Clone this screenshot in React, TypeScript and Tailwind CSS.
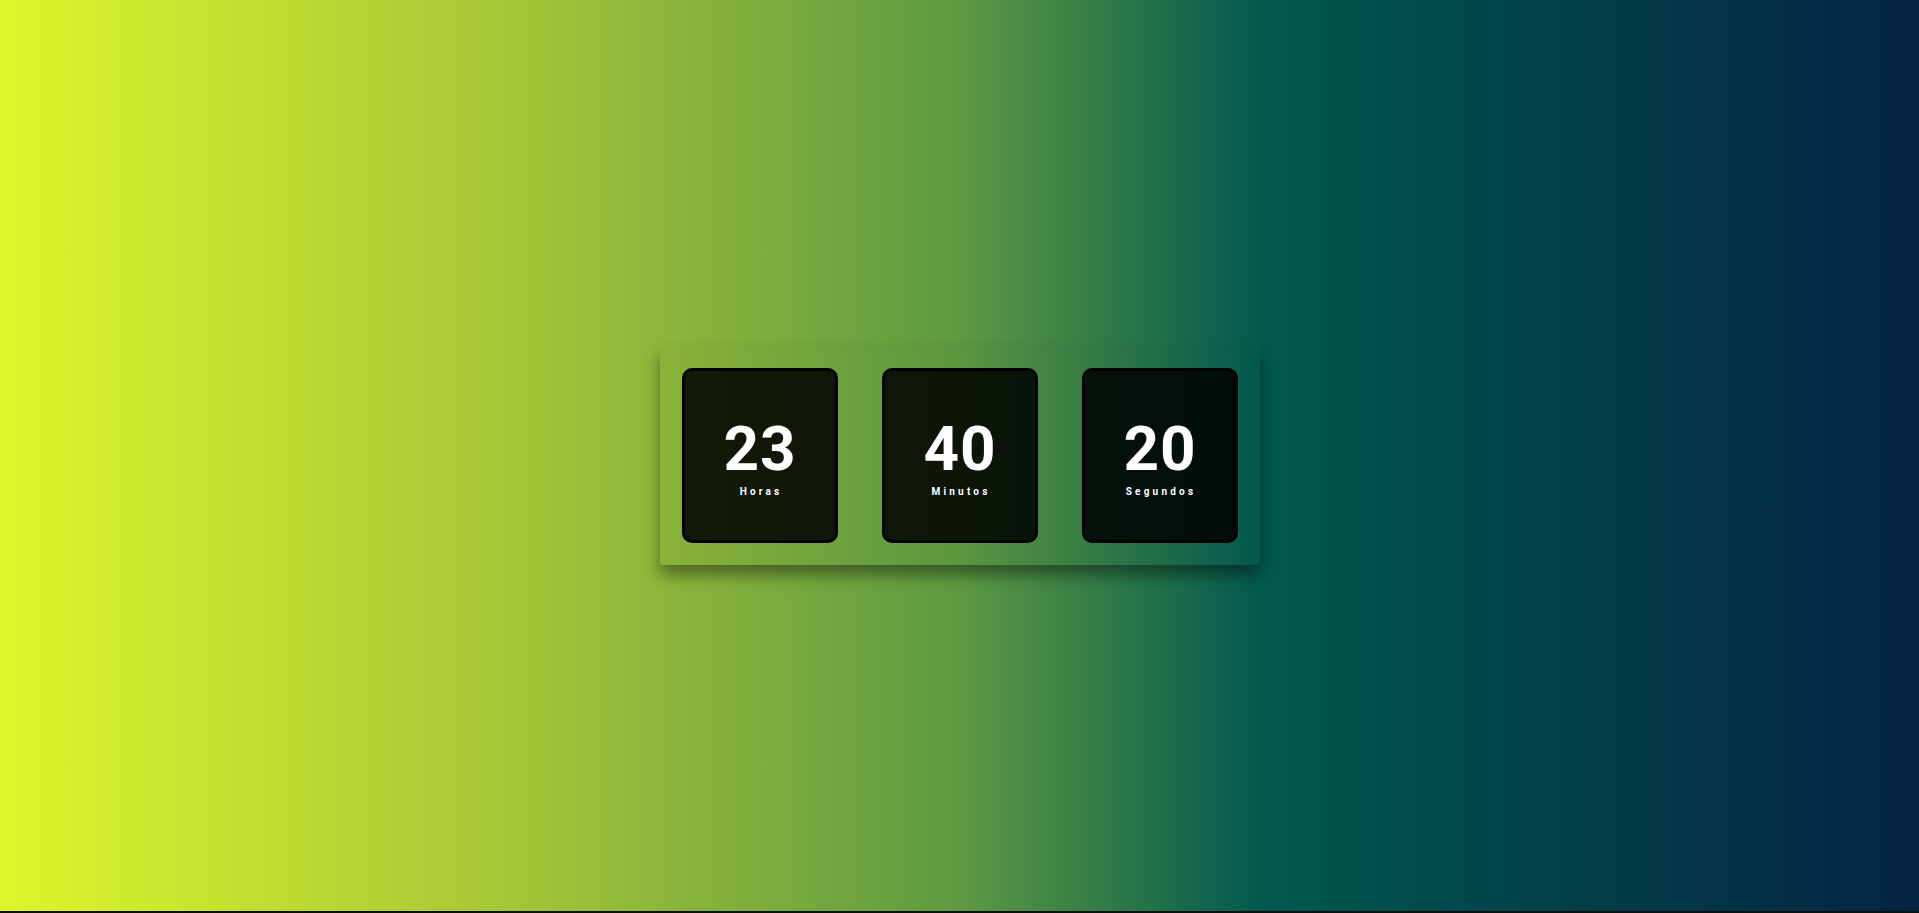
import React from "react";

const units = [
  { value: "23", label: "Horas" },
  { value: "40", label: "Minutos" },
  { value: "20", label: "Segundos" },
];

export default function App() {
  return (
    <div className="h-[913px] w-full bg-[#0b0f0e] overflow-hidden" style={{ fontFamily: "Roboto, 'Liberation Sans', sans-serif" }}>
      <div className="h-[911px] w-full flex items-center justify-center bg-[linear-gradient(to_right,#dcf72b_0%,#a9c836_25%,#5e9a42_50%,#00594f_66%,#004549_78%,#062443_100%)]">
        <div className="flex gap-[44px] p-[22px] rounded-[3px] bg-black/[0.02] shadow-[0_10px_16px_rgba(0,0,0,0.42)]">
          {units.map((u) => (
            <div
              key={u.label}
              className="w-[156px] h-[175px] rounded-[10px] border-[3px] border-black bg-black/[0.86] flex flex-col items-center justify-center pt-[6px]"
            >
              <div className="text-[62px] leading-none font-bold text-white tracking-[1px] pl-[1px]">{u.value}</div>
              <div className="mt-[4px] text-[10px] leading-[15px] font-bold text-white tracking-[3.2px] pl-[3px]">{u.label}</div>
            </div>
          ))}
        </div>
      </div>
    </div>
  );
}
